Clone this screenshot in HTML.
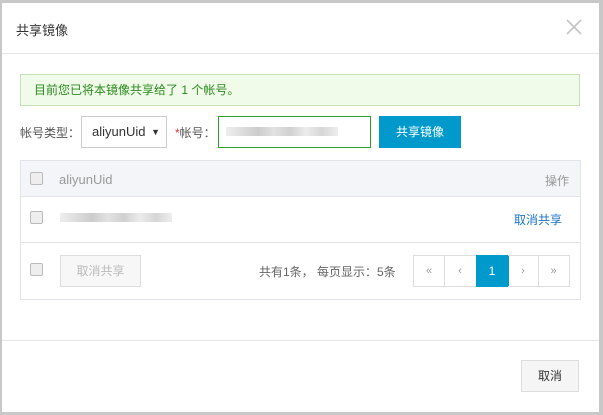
<!DOCTYPE html><html><head><style>
body{margin:0;width:603px;height:415px;background:#c8c8c8;font-family:"Liberation Sans","Noto Sans CJK SC",sans-serif;font-size:12px;color:#333;position:relative;overflow:hidden}
.dlg{position:absolute;left:2px;top:3px;width:597px;height:409px;background:#fff}
.a{position:absolute;white-space:nowrap}
.cb{position:absolute;width:11px;height:11px;border:1px solid #bbb;border-radius:2px;background:#eee}
.blur{position:absolute;height:9px;background:linear-gradient(90deg,#eee,#ddd,#ccc,#e2e2e2,#d0d0d0,#ececec,#d6d6d6,#eee)}
.pg{position:absolute;top:255px;height:30px;border:1px solid #ddd;border-left:none;text-align:center;line-height:30px;color:#999;font-size:11px}
</style></head><body>
<div class="dlg"></div>
<div class="a" style="left:16px;top:20px;font-size:13px">共享镜像</div>
<svg class="a" style="left:566px;top:19px" width="16" height="16"><path d="M1 1L15 15M15 1L1 15" stroke="#c4c4c4" stroke-width="1.6"/></svg>
<div class="a" style="left:2px;top:53px;width:597px;height:1px;background:#e5e5e5"></div>
<div class="a" style="left:20px;top:74px;width:558px;height:30px;border:1px solid #c5dfb6;background:#f1fbe9;color:#2a8a1e;line-height:30px;text-indent:13px">目前您已将本镜像共享给了 1 个帐号。</div>
<div class="a" style="left:20px;top:124px;color:#555">帐号类型：</div>
<div class="a" style="left:81px;top:116px;width:84px;height:30px;border:1px solid #ccc;line-height:30px;font-size:13px;color:#333"><span style="margin-left:10px">aliyunUid</span><span style="position:absolute;right:6px;font-size:9px">▼</span></div>
<div class="a" style="left:175px;top:124px;color:#555"><span style="color:#e4393c">*</span>帐号：</div>
<div class="a" style="left:218px;top:116px;width:151px;height:30px;border:1px solid #2a9d2a"></div>
<div class="blur" style="left:226px;top:127px;width:112px"></div>
<div class="a" style="left:379px;top:116px;width:82px;height:32px;background:#0099cc;color:#fff;text-align:center;line-height:32px">共享镜像</div>
<div class="a" style="left:20px;top:160px;width:559px;height:138px;border:1px solid #e1e4e8"></div>
<div class="a" style="left:21px;top:161px;width:559px;height:35px;background:#f4f5f8;border-bottom:1px solid #e1e4e8"></div>
<div class="cb" style="left:30px;top:172px"></div>
<div class="a" style="left:59px;top:172px;color:#999;font-size:13px">aliyunUid</div>
<div class="a" style="left:545px;top:172px;color:#999">操作</div>
<div class="cb" style="left:30px;top:211px"></div>
<div class="blur" style="left:60px;top:213px;width:112px"></div>
<div class="a" style="left:514px;top:211px;color:#1a74c4">取消共享</div>
<div class="a" style="left:21px;top:242px;width:559px;height:1px;background:#e1e4e8"></div>
<div class="cb" style="left:30px;top:263px"></div>
<div class="a" style="left:60px;top:255px;width:79px;height:30px;border:1px solid #ddd;background:#f7f7f7;color:#bbb;text-align:center;line-height:30px">取消共享</div>
<div class="a" style="left:259px;top:263px;color:#666">共有1条， 每页显示：5条</div>
<div class="pg" style="left:413px;width:30px;border-left:1px solid #ddd">«</div>
<div class="pg" style="left:444px;width:32px">‹</div>
<div class="pg" style="left:476px;width:32px;background:#0099cc;color:#fff;border-color:#0099cc;font-size:12px">1</div>
<div class="pg" style="left:508px;width:30px">›</div>
<div class="pg" style="left:538px;width:31px">»</div>
<div class="a" style="left:2px;top:340px;width:597px;height:1px;background:#e5e5e5"></div>
<div class="a" style="left:521px;top:360px;width:56px;height:30px;border:1px solid #ddd;background:#f5f5f5;text-align:center;line-height:30px">取消</div>
</body></html>
